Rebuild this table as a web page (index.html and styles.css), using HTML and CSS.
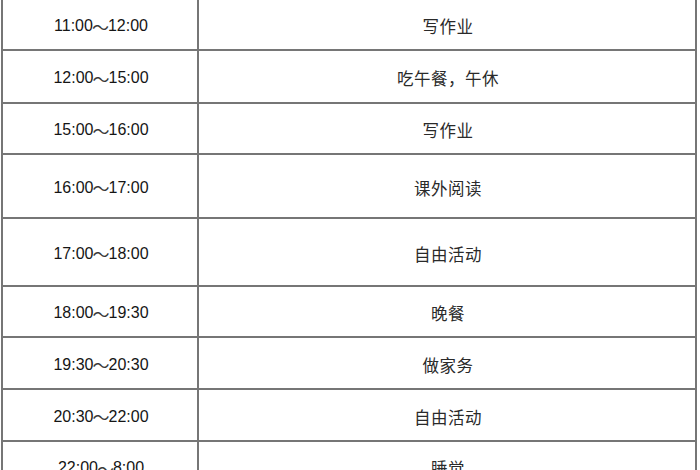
FILE: index.html
```html
<!DOCTYPE html>
<html lang="zh">
<head>
<meta charset="utf-8">
<title>作息时间表</title>
<link rel="stylesheet" href="styles.css">
</head>
<body>
<div class="table">
  <div class="row h49"><div class="time">11:00<span class="tilde">～</span>12:00</div><div class="task">写作业</div></div>
  <div class="row h51"><div class="time">12:00<span class="tilde">～</span>15:00</div><div class="task">吃午餐，午休</div></div>
  <div class="row h49"><div class="time">15:00<span class="tilde">～</span>16:00</div><div class="task">写作业</div></div>
  <div class="row h62"><div class="time">16:00<span class="tilde">～</span>17:00</div><div class="task">课外阅读</div></div>
  <div class="row h66"><div class="time">17:00<span class="tilde">～</span>18:00</div><div class="task">自由活动</div></div>
  <div class="row h49"><div class="time">18:00<span class="tilde">～</span>19:30</div><div class="task">晚餐</div></div>
  <div class="row h50"><div class="time">19:30<span class="tilde">～</span>20:30</div><div class="task">做家务</div></div>
  <div class="row h50"><div class="time">20:30<span class="tilde">～</span>22:00</div><div class="task">自由活动</div></div>
  <div class="row h49"><div class="time">22:00<span class="tilde">～</span>8:00</div><div class="task">睡觉</div></div>
</div>
</body>
</html>
```

FILE: styles.css
```css
html, body {
  margin: 0;
  padding: 0;
  background: #ffffff;
  overflow: hidden;
}

.table {
  margin-left: 1px;
  width: 696px;
  box-sizing: border-box;
  border-left: 2px solid #767676;
  border-right: 2px solid #767676;
  display: flex;
  flex-direction: column;
}

.row {
  display: grid;
  grid-template-columns: 196px 1fr;
  border-bottom: 2px solid #767676;
}

.h49 { height: 49px; }
.h50 { height: 50px; }
.h51 { height: 51px; }
.h62 { height: 62px; }
.h66 { height: 66px; }

.time,
.task {
  display: flex;
  align-items: center;
  justify-content: center;
  padding-top: 3px;
  box-sizing: border-box;
}

.time {
  border-right: 2px solid #767676;
  font-family: "Liberation Sans", Arial, sans-serif;
  font-size: 16px;
  color: #151515;
  padding-left: 2px;
}

.tilde {
  font-family: "Noto Sans CJK SC", sans-serif;
  font-size: 17px;
  color: #3a3a3a;
  margin: 0 -1px;
}

.task {
  font-family: "Noto Sans CJK SC", "Noto Sans CJK JP", sans-serif;
  font-size: 16.5px;
  color: #2a2a2a;
  letter-spacing: 0.5px;
  padding-left: 2px;
}
```
